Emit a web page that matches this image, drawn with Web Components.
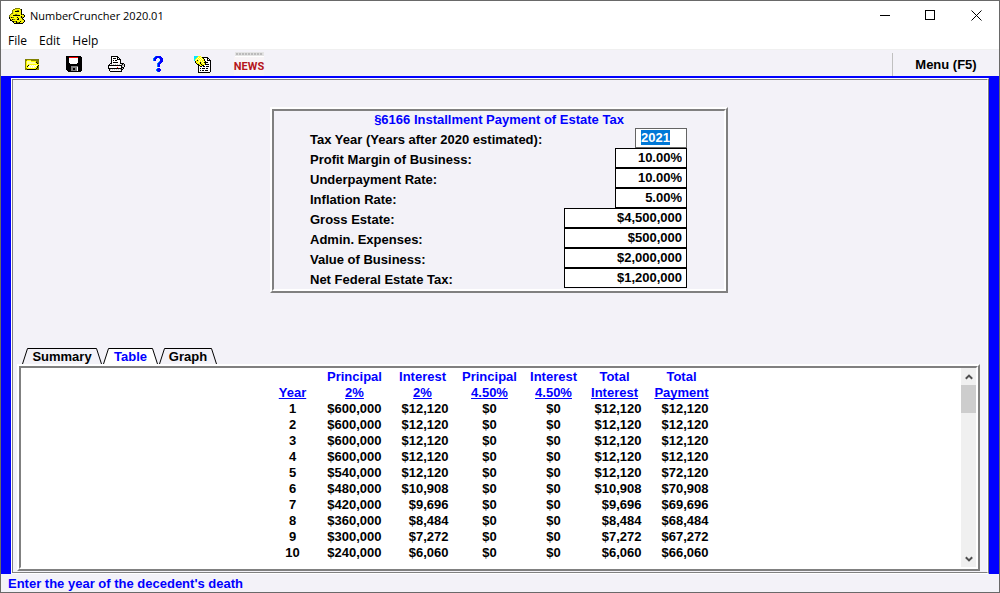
<!DOCTYPE html>
<html lang="en">
<head>
<meta charset="utf-8">
<title>NumberCruncher 2020.01</title>
<style>
html, body { margin: 0; height: 100%; }
body { font: bold 13px/16px "Liberation Sans", Arial, sans-serif; color: #000; background: #f3f2f8; }
</style>
</head>
<body>
<number-cruncher></number-cruncher>
<script>
const COLORS = { k: '#000', w: '#fff', y: '#ffff00', o: '#808000', p: '#ffffa0', g: '#808080', l: '#c0c0c0', r: '#ff0000', b: '#0000ff', t: '#0080ff', c: '#00e8ff', s: '#e8e020' };
const ICONS = {
  app: [
    '......ooooo.....', '....oossyyyok...', '...osyysooysk...', '...osykkkksyk...', '...osyyyyyysk...', '..oosyyssyysk...', '.osyysoossyykok.', 'ossykkkkkkkysysk',
    'osyyyyyyyyysksyk', 'kskooyyskyyskok.', 'ksyyyyyyskyysk..', '.kskoosykkysyok.', '.kksyyyyyysysysk', '...kkookyyyksysk', '....kyykookyysk.', '.....kkkkkkkkk..'],
  open: [
    'oooooooooooooo', 'ooyyyyoooooooo', 'oyppppyyyyyooo', 'oyppppppppykoo', 'oypppppppppyko', 'oypyyyyyyyyyyy', 'oyykpwpwpwpwyk', 'oykpwpwpwpwyko', 'oyypwpwpwpyyko', 'ooyyyyyyyyykoo', 'ookkkkkkkkkooo'],
  save: [
    'kkkkkkkkkkkkkkk.', 'kkkrrrrrrrrrkkkk', 'kkkwwwwwwwwwkkkk', 'kkkwwwwwwwwwkkkk', 'kkkwwwwwwwwwkkkk', 'kkkwwwwwwwwwkkkk', 'kkkwwwwwwwwwkkkk', 'kkkkwwwwwwwkkkkk',
    'kkkkkkkkkkkkkkkk', 'kkkkkkkkkkkkkkkk', 'kkkkkgggggggkkkk', 'kkkkkggggggwkkkk', 'kkkkkggkkggwkkkk', 'kkkkkggkkggwkkkk', '.kkkkggggggwkkkk', '..kkkkkkkkkkkkk.'],
  print: [
    '...kkkkkkk.......', '...kwwwwwkk......', '...kwkkkwkwk.....', '...kwwwwwkkkk....', '...kwkwkkwwwk....', '...kwwwwwwwwk....', '...kwkkkkkwwk....', '..kkwwwwwwwwkkkk.',
    '.kwlwlwlwlwlwlklk', 'kkkkkkkkkkkkkkllk', 'kwwwwwwwwwwwwklwk', 'kwwwwwwwwrwwwkkk.', 'kkkkkkkkkkkkkklk.', '.klwlwlwlwlwlkk..', '.kwwwwwwwwwwwk...', '..kkkkkkkkkkkk...'],
  help: [
    '..tbbbbb...', '.tbbbbbbb..', 'tbbb..tbbb.', 'tbb....bbb.', 'tbb....bbb.', '......tbbb.', '.....tbbb..', '....tbbb...', '....tbb....', '....tbb....', '....tbb....', '...........', '....tbb....', '...tbbbb...', '...tbbbb...', '....tbb....'],
  notes: [
    'ccccyyy..........', 'cccypypykkkkkk...', 'ccypypypykwwwkk..', 'cypypypypykwwkwk.', 'cpykypypyykwwkkkk', '.kyyypypypykwwwwk', '.kyypykypykkkkwwk', '..kyyykyypykwwwwk', '...kkyykyyykkkkwk', '....kkyykkwwwwwwk', '....kwkkwkkwkkkwk', '....kwwwwwwwwwwwk', '....kwkwkkkwkkwwk', '....kwwwwwwwwwwwk', '....kwkwkkwkkkwwk', '....kwwwwwwwwwwwk', '....kkkkkkkkkkkk.']
};

class PixelIcon extends HTMLElement {
  connectedCallback() {
    const rows = ICONS[this.getAttribute('name')];
    const width = Math.max(...rows.map(r => r.length));
    let cells = '';
    rows.forEach((row, y) => {
      for (const run of row.matchAll(/([a-z])\1*/g))
        cells += `<path fill="${COLORS[run[1]]}" d="M${run.index} ${y}h${run[0].length}v1h-${run[0].length}z"/>`;
    });
    this.attachShadow({ mode: 'open' }).innerHTML = `
      <style>:host{display:block;flex:none} svg{display:block}</style>
      <svg width="${width}" height="${rows.length}" viewBox="0 0 ${width} ${rows.length}" shape-rendering="crispEdges" aria-hidden="true">${cells}</svg>`;
  }
}

class TitleBar extends HTMLElement {
  constructor() {
    super();
    this.attachShadow({ mode: 'open' }).innerHTML = `
      <style>
        :host{display:flex;align-items:center;height:29px;padding-left:8px;background:#fff;font:11px/16px "Open Sans","Noto Sans",sans-serif}
        .name{margin-left:5px;flex:1}
        button{width:46px;height:29px;border:0;padding:0;background:none;display:grid;place-items:center}
        svg{display:block}
      </style>
      <pixel-icon name="app"></pixel-icon>
      <span class="name"><slot></slot></span>
      <button aria-label="Minimize"><svg width="11" height="11" shape-rendering="crispEdges"><path d="M1 5h10v1H1z"/></svg></button>
      <button aria-label="Maximize"><svg width="11" height="11" shape-rendering="crispEdges"><path d="M.5.5h9v9h-9z" fill="none" stroke="#000"/></svg></button>
      <button aria-label="Close"><svg width="11" height="11"><path d="M.5.5l10 10M10.5.5l-10 10" stroke="#000"/></svg></button>`;
  }
}

class MenuBar extends HTMLElement {
  constructor() {
    super();
    this.attachShadow({ mode: 'open' }).innerHTML = `
      <style>
        :host{display:flex;gap:12px;height:19px;padding:0 7px;background:#fff;border-bottom:1px solid #f0f0f0}
        button{border:0;padding:0;background:none;color:#000;font:12px/22px "Open Sans","Noto Sans",sans-serif}
      </style>
      <button>File</button><button>Edit</button><button>Help</button>`;
  }
}

class ToolBar extends HTMLElement {
  constructor() {
    super();
    this.attachShadow({ mode: 'open' }).innerHTML = `
      <style>
        :host{display:flex;height:26px;padding-left:10px;border-bottom:2px solid #00f}
        button{width:42px;border:0;padding:2px 0 0;background:none;display:grid;place-items:center;font:inherit;color:inherit}
        .notes{width:46px}
        .news{width:48px;align-content:start;justify-items:center}
        .strip{width:29px;height:5px;box-sizing:border-box;background:#e4e4e4;border-bottom:1px solid #fff}
        .strip::before{content:"";display:block;height:2px;margin:1px 1px 0;background:repeating-linear-gradient(90deg,#bbb 0 2px,#ddd 2px 3px)}
        .word{color:#b4161c;background:#f8f4f6;font:bold 11px/19px Roboto,"Liberation Sans",sans-serif}
        .menu{width:107px;margin:3px 0 0 auto;padding:0;border-left:1px solid #c0c0c0}
      </style>
      <button aria-label="Open"><pixel-icon name="open"></pixel-icon></button>
      <button aria-label="Save"><pixel-icon name="save"></pixel-icon></button>
      <button aria-label="Print"><pixel-icon name="print"></pixel-icon></button>
      <button aria-label="Help"><pixel-icon name="help"></pixel-icon></button>
      <button class="notes" aria-label="Notes"><pixel-icon name="notes"></pixel-icon></button>
      <button class="news"><span class="strip"></span><span class="word">NEWS</span></button>
      <button class="menu">Menu (F5)</button>`;
  }
}

/* Box with a two-step bevel: white then grey on the top and left, reversed on the other sides. */
class BevelPanel extends HTMLElement {
  constructor() {
    super();
    this.attachShadow({ mode: 'open' }).innerHTML = `
      <style>
        :host{display:flex;border:2px solid;border-color:#fff #808080 #808080 #fff}
        .inner{flex:1;min-width:0;min-height:0;border:2px solid;border-color:#808080 #fff #fff #808080;display:flex;flex-direction:var(--dir,column)}
      </style>
      <div class="inner"><slot></slot></div>`;
  }
}

class FormRow extends HTMLElement {
  connectedCallback() {
    const size = this.getAttribute('size');
    this.attachShadow({ mode: 'open' }).innerHTML = `
      <style>
        :host{display:flex;justify-content:space-between;height:20px;padding:0 37px 0 36px}
        label{line-height:24px;white-space:nowrap}
        input{box-sizing:border-box;height:20px;margin:0;padding:0 4px 2px;border:1px solid #000;border-radius:0;outline:0;background:#fff;color:#000;font:inherit;text-align:right}
        .year{width:52px;border-color:#646464;text-align:left;padding-left:5px}
        .rate{width:72px}
        .money{width:123px}
        ::selection{background:#0078d7;color:#fff}
      </style>
      <label for="field"><slot></slot></label>
      <input id="field" class="${size}" value="${this.getAttribute('value')}">`;
    if (size === 'year') {
      const field = this.shadowRoot.querySelector('input');
      field.focus();
      field.select();
    }
  }
}

class TabStrip extends HTMLElement {
  constructor() {
    super();
    const tab = (name, w, on) => `
      <button type="button" role="tab" aria-selected="${!!on}" style="width:${w}px">
        <svg width="${w}" height="16" aria-hidden="true"><path d="M.5 16L5.5.5H${w - 5.5}L${w - .5} 16" fill="${on ? '#fff' : 'none'}" stroke="#000"/></svg>
        <span>${name}</span></button>`;
    this.attachShadow({ mode: 'open' }).innerHTML = `
      <style>
        :host{display:flex;gap:1px;padding-left:9px}
        button{display:grid;grid-template:16px/1fr;justify-items:center;height:16px;border:0;padding:0;background:none;font:inherit;color:#000}
        svg,span{grid-area:1/1}
        span{z-index:1;line-height:18px}
        [aria-selected=true]{color:#00f}
      </style>` +
      [['Summary', 80], ['Table', 55, true], ['Graph', 58]].map(a => tab(...a)).join('');
  }
}

const ROWS = [
  ['1', '$600,000', '$12,120', '$0', '$0', '$12,120', '$12,120'],
  ['2', '$600,000', '$12,120', '$0', '$0', '$12,120', '$12,120'],
  ['3', '$600,000', '$12,120', '$0', '$0', '$12,120', '$12,120'],
  ['4', '$600,000', '$12,120', '$0', '$0', '$12,120', '$12,120'],
  ['5', '$540,000', '$12,120', '$0', '$0', '$12,120', '$72,120'],
  ['6', '$480,000', '$10,908', '$0', '$0', '$10,908', '$70,908'],
  ['7', '$420,000', '$9,696', '$0', '$0', '$9,696', '$69,696'],
  ['8', '$360,000', '$8,484', '$0', '$0', '$8,484', '$68,484'],
  ['9', '$300,000', '$7,272', '$0', '$0', '$7,272', '$67,272'],
  ['10', '$240,000', '$6,060', '$0', '$0', '$6,060', '$66,060']
];

class PaymentTable extends HTMLElement {
  constructor() {
    super();
    const heads = [['', 'Year'], ['Principal', '2%'], ['Interest', '2%'], ['Principal', '4.50%'], ['Interest', '4.50%'], ['Total', 'Interest'], ['Total', 'Payment']];
    const widths = [60, 64, 72, 62, 66, 56, 78];
    this.attachShadow({ mode: 'open' }).innerHTML = `
      <style>
        :host{display:block;flex:1;min-width:0;overflow:hidden;padding:1px 0 0 1px}
        table{table-layout:fixed;width:458px;margin:0 auto;border-collapse:collapse;text-align:center}
        th,td{padding:0;height:16px;white-space:nowrap;vertical-align:bottom}
        th{color:#00f}
        u{text-underline-offset:1px;text-decoration-thickness:1px;text-decoration-skip-ink:none}
        td:nth-child(2),td:nth-child(3),td:nth-child(6),td:nth-child(7){text-align:right}
        td:nth-child(2){padding-right:5px}
        td:nth-child(3){padding-right:10px}
        td:nth-child(6){padding-right:1px}
        td:nth-child(7){padding-right:12px}
      </style>
      <table>
        <colgroup>${widths.map(w => `<col style="width:${w}px">`).join('')}</colgroup>
        <thead><tr>${heads.map(h => `<th scope="col">${h[0] ? h[0] + '<br>' : ''}<u>${h[1]}</u></th>`).join('')}</tr></thead>
        <tbody>${ROWS.map(r => `<tr>${r.map(c => `<td>${c}</td>`).join('')}</tr>`).join('')}</tbody>
      </table>`;
  }
}

class ScrollRail extends HTMLElement {
  constructor() {
    super();
    this.attachShadow({ mode: 'open' }).innerHTML = `
      <style>
        :host{display:flex;flex-direction:column;width:15px;background:#f0f0f0}
        button{height:17px;width:15px;border:0;padding:0;background:none;display:grid;place-items:center}
        .track{flex:1}
        .thumb{height:28px;background:#cdcdcd}
      </style>
      <button aria-label="Scroll up"><svg width="8" height="6"><path d="M.8 4.8L4 1.6l3.2 3.2" fill="none" stroke="#505050" stroke-width="2"/></svg></button>
      <div class="track"><div class="thumb"></div></div>
      <button aria-label="Scroll down"><svg width="8" height="6"><path d="M.8 1.2L4 4.4l3.2-3.2" fill="none" stroke="#505050" stroke-width="2"/></svg></button>`;
  }
}

class NumberCruncher extends HTMLElement {
  constructor() {
    super();
    this.attachShadow({ mode: 'open' }).innerHTML = `
      <style>
        :host{display:flex;flex-direction:column;box-sizing:border-box;height:100vh;min-height:480px;border:1px solid #696969}
        .frame{flex:1;min-height:0;display:flex;padding:0 10px;background:#00f}
        main{flex:1;min-width:0;display:flex;flex-direction:column;box-sizing:border-box;background:#f3f2f8;border:1px solid;border-color:#fff #808080 #fff #fff}
        .sheet{flex:1;min-height:0;display:flex;flex-direction:column;border:1px solid;border-color:#808080 #fff #808080 #808080}
        .form{align-self:center;width:458px;box-sizing:border-box;margin:27px 2px 55px 0}
        h1{margin:0;font:inherit;line-height:17px;color:#00f;text-align:center}
        .foot{height:1px}
        .table{--dir:row;flex:1;min-height:0;margin:0 7px 1px 4px;background:#fff}
        footer{height:18px;line-height:20px;padding-left:7px;color:#00f}
      </style>
      <title-bar>NumberCruncher 2020.01</title-bar>
      <menu-bar></menu-bar>
      <tool-bar></tool-bar>
      <div class="frame"><main><div class="sheet">
        <bevel-panel class="form">
          <h1>§6166 Installment Payment of Estate Tax</h1>
          <form-row size="year" value="2021">Tax Year (Years after 2020 estimated):</form-row>
          <form-row size="rate" value="10.00%">Profit Margin of Business:</form-row>
          <form-row size="rate" value="10.00%">Underpayment Rate:</form-row>
          <form-row size="rate" value="5.00%">Inflation Rate:</form-row>
          <form-row size="money" value="$4,500,000">Gross Estate:</form-row>
          <form-row size="money" value="$500,000">Admin. Expenses:</form-row>
          <form-row size="money" value="$2,000,000">Value of Business:</form-row>
          <form-row size="money" value="$1,200,000">Net Federal Estate Tax:</form-row>
          <div class="foot"></div>
        </bevel-panel>
        <tab-strip></tab-strip>
        <bevel-panel class="table"><payment-table></payment-table><scroll-rail></scroll-rail></bevel-panel>
      </div></main></div>
      <footer>Enter the year of the decedent's death</footer>`;
  }
}

customElements.define('pixel-icon', PixelIcon);
customElements.define('title-bar', TitleBar);
customElements.define('menu-bar', MenuBar);
customElements.define('tool-bar', ToolBar);
customElements.define('bevel-panel', BevelPanel);
customElements.define('form-row', FormRow);
customElements.define('tab-strip', TabStrip);
customElements.define('payment-table', PaymentTable);
customElements.define('scroll-rail', ScrollRail);
customElements.define('number-cruncher', NumberCruncher);
</script>
</body>
</html>
